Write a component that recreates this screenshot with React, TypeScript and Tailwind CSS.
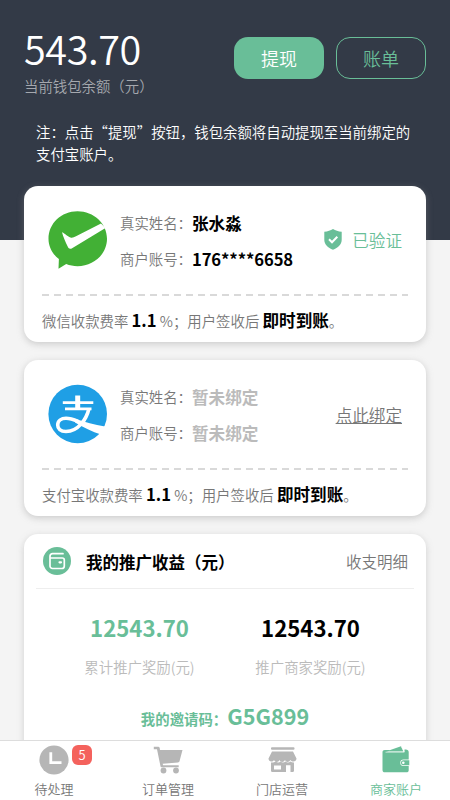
import React from 'react'

const WechatLogo = () => (
  <svg width="60" height="60" viewBox="0 0 60 60" className="shrink-0">
    <path d="M29.5 1.2C45.800 1.200 59 13.500 59 28.700S45.800 56.200 29.500 56.200c-4 0-7.800-.7-11.300-2.100L10.500 58.800l.4-9.700C4.500 44.100.5 36.800.5 28.700.5 13.500 13.200 1.200 29.500 1.200z" fill="#42b035" />
    <path d="M14 22.200c1.500.3 5.500 4.200 8.500 5.300 2 .7 3.500-.5 5.500-1.300l25-12.600 4.500 4.300-33 20c-2.300 1.300-3.500 1.300-4.700-1.100-2.500-5-4.600-10.300-5.800-14.600z" fill="#fff" />
  </svg>
)

const AlipayLogo = () => (
  <svg width="60" height="60" viewBox="0 0 60 60" className="shrink-0">
    <circle cx="29.700" cy="30" r="29.300" fill="#1f9fe5" />
    <path d="M27.200 11.500h5v13h-5z" fill="#fff" />
    <path d="M14.800 17.200h30.500v2.700H14.800zM17 23.500h26.500v2.700H17z" fill="#fff" />
    <path d="M41 24.500C38.500 35 30.500 47.500 18 47.500c-5.500 0-8.300-2.800-8.300-6.500 0-4 3.500-6.700 8.300-6.700 4 0 8 1.400 12 3.100" fill="none" stroke="#fff" strokeWidth="3.600" />
    <path d="M28 34.900c9 3.500 18 5.500 29 7.600l-4 8c-8.500-2.800-18-7.500-26-12.100z" fill="#fff" />
  </svg>
)

const ShieldIcon = () => (
  <svg width="18" height="21" viewBox="0 0 18 21">
    <path d="M9 0c2.500 1.600 5.200 2.500 8.700 2.700v8c0 5-3.700 7.800-8.700 10.100C4 18.500.3 15.700.3 10.700v-8C3.800 2.500 6.500 1.600 9 0z" fill="#69be98" />
    <path d="M5 10.200l3 3 5.300-5.500" fill="none" stroke="#fff" strokeWidth="2" />
  </svg>
)

const IncomeIcon = () => (
  <svg width="28" height="28" viewBox="0 0 28 28">
    <circle cx="14" cy="14" r="14" fill="#69be98" />
    <g fill="none" stroke="#fff" strokeWidth="1.700" strokeLinejoin="round" strokeLinecap="round">
      <path d="M20 6.700H9.500A2.500 2.500 0 0 0 7 9.200V19a2.500 2.500 0 0 0 2.500 2.500h9.300a2.500 2.500 0 0 0 2.500-2.500v-6a2 2 0 0 0-2-2H7.500" />
      <path d="M16.500 15.300h1.500" strokeWidth="2.200" />
    </g>
  </svg>
)

const ClockIcon = () => (
  <svg width="30" height="30" viewBox="0 0 30 30">
    <circle cx="15" cy="15" r="14.600" fill="#b6b6b6" />
    <path d="M11.800 7.200v10.500h10.700" fill="none" stroke="#fff" strokeWidth="2.800" />
  </svg>
)

const CartIcon = () => (
  <svg width="30" height="28" viewBox="0 0 30 28" fill="#b6b6b6">
    <path d="M.8.8h4.500c.7 0 1.200.4 1.400 1.100L7 4h22.500l-3 11.300c-.2.700-.8 1.200-1.500 1.200L9.600 17.800l.5 1.500h15.600v2H8.700c-.6 0-1.100-.4-1.200-1L4 3.200H.8z" />
    <circle cx="10.500" cy="24.500" r="2.900" />
    <circle cx="23" cy="24.500" r="2.900" />
  </svg>
)

const ShopIcon = () => (
  <svg width="29" height="26" viewBox="0 0 29 26" fill="#b6b6b6">
    <rect x="3" y="0.300" width="23.500" height="2.500" rx="1" />
    <path d="M4 4.500h21l3.500 7c0 3.500-4.500 4-6 1.500-1.500 2.500-4.500 2.500-5.500 0-1.200 2.500-4.500 2.500-5.500 0-1 2.500-4.500 2.500-5.500 0-1.500 2.500-5.500 2-5.500-1.500z" />
    <path d="M3 15.500c2 .2 3.500-.2 4.500-1 2 1.300 3.800 1.300 5 0 1.500 1.300 3.500 1.300 5 0 1.500 1.300 3.500 1.300 5 0 1 .8 2.200 1.200 3.500 1v8.300c0 .7-.4 1.100-1 1.100h-2.500v-6.600h-4.500v6.600H4c-.6 0-1-.4-1-1.100zm3 3v4h7v-4z" fillRule="evenodd" />
  </svg>
)

const WalletIcon = () => (
  <svg width="28" height="27" viewBox="0 0 28 27">
    <path d="M2.800 4h6L4.500 6h18V3.500h1.300c1.800 0 2.900 1 2.900 2.600v7.400h-5.200a3.200 3.200 0 0 0 0 6.400h5.200v4.300c0 1.300-.9 2.100-2.200 2.100H2.800C1.400 26.300.5 25.400.5 24V6c0-1.200.9-2 2.300-2z" fill="#69be98" />
    <path d="M4 5.600L19 .2l2.600 5.400z" fill="#69be98" />
    <path d="M3.500 6.200h18.700L19.500.8" fill="none" stroke="#fff" strokeWidth=".6" />
    <path d="M21.500 14.200h5.800v5h-5.800a2.500 2.500 0 0 1 0-5z" fill="#69be98" />
    <circle cx="21.300" cy="16.700" r="1.300" fill="#fff" />
  </svg>
)

const accounts = [
  { logo: <WechatLogo />, name: '张水淼', account: '176****6658', rate: '微信收款费率', verified: true },
  { logo: <AlipayLogo />, name: '暂未绑定', account: '暂未绑定', rate: '支付宝收款费率', verified: false },
]

const tabs = [
  { label: '待处理', icon: <ClockIcon />, count: 5 },
  { label: '订单管理', icon: <CartIcon /> },
  { label: '门店运营', icon: <ShopIcon /> },
  { label: '商家账户', icon: <WalletIcon />, active: true },
]

const App = () => {
  return (
    <div lang="zh-CN" className="w-[450px] h-[800px] overflow-hidden flex flex-col bg-[#f4f4f4] font-[family-name:'Noto_Sans_CJK_SC',sans-serif] [font-weight:350] text-[14.4px] text-[#777]">
      <div className="h-[240px] shrink-0 bg-[#333a47] text-white">
        <div className="flex justify-between px-6 pt-[22px]">
          <div>
            <div className="text-[39.6px] leading-[52px] tracking-[-0.4px]">543.70</div>
            <div className="pt-[2px] leading-5 text-[#a5a8ae]">当前钱包余额（元）</div>
          </div>
          <div className="flex gap-3 pt-[15px] text-[18px]">
            <button className="w-[90px] h-[42px] rounded-[14px] bg-[#69be98]">提现</button>
            <button className="w-[90px] h-[42px] rounded-[14px] border border-[#69be98] text-[#69be98]">账单</button>
          </div>
        </div>
        <p className="px-9 pt-[25px] leading-[21.6px]">注：点击“提现”按钮，钱包余额将自动提现至当前绑定的支付宝账户。</p>
      </div>

      <div className="-mt-[54px] flex-1 min-h-0 px-6 flex flex-col gap-[18px]">
        {accounts.map((item) => (
          <div key={item.rate} className="h-[156px] shrink-0 rounded-[14px] bg-white px-[18px] shadow-[0_2px_7px_rgba(140,140,140,0.4)]">
            <div className="h-[108px] px-[6px] flex items-center">
              {item.logo}
              <div className="ml-3 pt-[2px] flex-1">
                <div className="flex items-center h-9">
                  <span>真实姓名：</span>
                  <span className={`text-[16.600px] font-bold ${item.verified ? 'text-black' : 'text-[#bbb]'}`}>{item.name}</span>
                </div>
                <div className="flex items-center h-9">
                  <span>商户账号：</span>
                  <span className={`text-[16.600px] font-bold ${item.verified ? 'text-black tracking-[-0.1px]' : 'text-[#bbb]'}`}>{item.account}</span>
                </div>
              </div>
              {item.verified ? (
                <div className="flex items-center gap-[10px] text-[16.600px] text-[#69be98]">
                  <ShieldIcon />
                  <span className="pt-px">已验证</span>
                </div>
              ) : (
                <a className="pt-[2px] text-[16.600px] underline">点此绑定</a>
              )}
            </div>
            <div className="h-[2px] bg-[repeating-linear-gradient(90deg,#d9d9d9_0_7.5px,transparent_7.5px_12px)]"></div>
            <div className="h-[48px] flex items-center whitespace-pre pt-px">
              {item.rate} <b className="text-[16.600px] text-black">1.1</b> %；用户签收后 <b className="text-[16.600px] text-black">即时到账</b>。
            </div>
          </div>
        ))}

        <div className="h-[240px] shrink-0 rounded-t-[14px] bg-white px-3 shadow-[0_2px_7px_rgba(140,140,140,0.35)]">
          <div className="h-[55px] flex items-center pl-[7px] pr-[6px] border-b border-[#eee]">
            <IncomeIcon />
            <span className="ml-[15px] pt-[2px] flex-1 text-[16.500px] font-bold text-black">我的推广收益（元）</span>
            <span className="pt-[2px] text-[15.500px]">收支明细</span>
          </div>
          <div className="grid grid-cols-2 px-[18px] pt-5 text-center">
            <div className="text-[22.200px] leading-9 font-bold text-[#69be98]">12543.70</div>
            <div className="text-[22.200px] leading-9 font-bold text-black">12543.70</div>
            <div className="pt-[9px] leading-[26px] text-[#bbb]">累计推广奖励(元)</div>
            <div className="pt-[9px] leading-[26px] text-[#bbb]">推广商家奖励(元)</div>
          </div>
          <div className="mt-5 flex justify-center items-baseline font-bold text-[#69be98]">
            <span>我的邀请码：</span>
            <span className="text-[21.600px]">G5G899</span>
          </div>
        </div>
      </div>

      <div className="relative h-[60px] shrink-0 border-t border-[#ddd] bg-white text-[13px]">
        <div className="w-[456px] -ml-[3px] flex">
          {tabs.map((tab) => (
            <div key={tab.label} className={`relative flex-1 flex flex-col items-center ${tab.active ? 'text-[#69be98]' : 'text-[#777]'}`}>
              <div className="h-[37px] flex items-center justify-center">{tab.icon}</div>
              <div className="leading-5 pt-px">{tab.label}</div>
              {tab.count && (
                <span className="absolute left-[75px] top-1 w-5 h-5 rounded-md bg-[#f4625d] text-white text-center leading-5">{tab.count}</span>
              )}
            </div>
          ))}
        </div>
      </div>
    </div>
  )
}

export default App
